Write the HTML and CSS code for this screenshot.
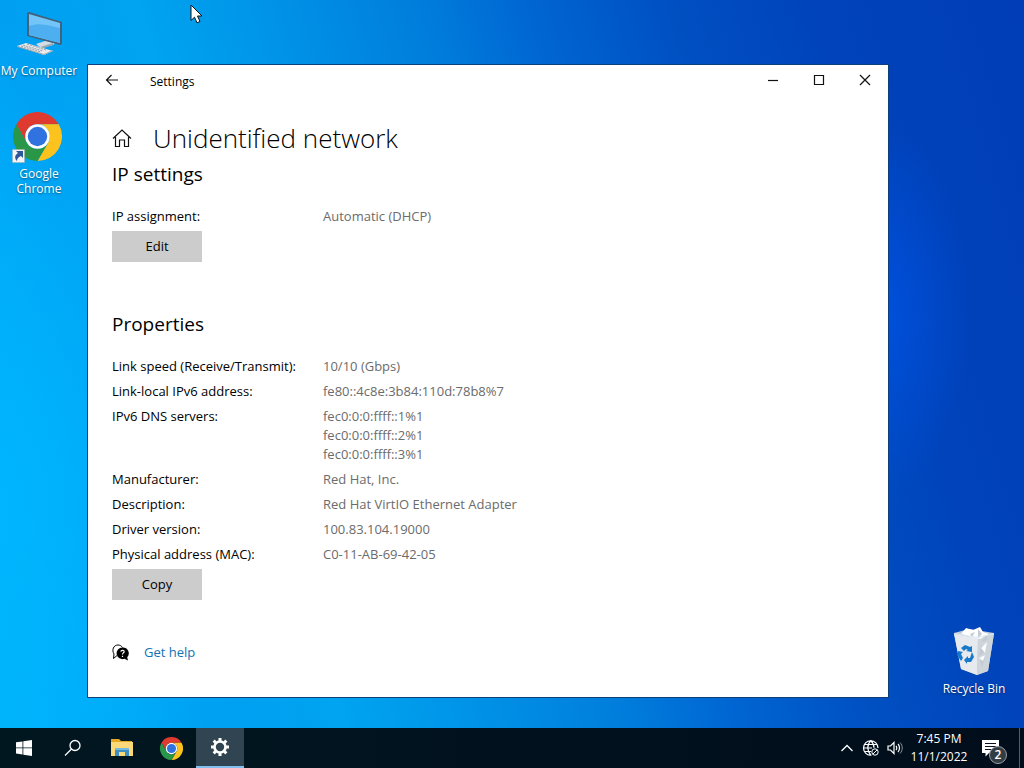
FILE: index.html
```html
<!doctype html>
<html lang="en">
  <head>
    <meta charset="utf-8">
    <meta name="viewport" content="width=device-width, initial-scale=1">
    <link rel="stylesheet" href="styles.css">
    <title>Settings</title>
  </head>
  <body>
    <svg class="defs" aria-hidden="true">
      <symbol id="chrome" viewBox="0 0 48 48">
        <path fill="#df3a30" d="M24 12H44.8A24 24 0 0 0 3.2 12L13.6 30A12 12 0 0 1 24 12z"/>
        <path fill="#fcc31e" d="M34.4 30L24 48A24 24 0 0 0 44.8 12H24A12 12 0 0 1 34.4 30z"/>
        <path fill="#2a9748" d="M13.6 30L3.2 12A24 24 0 0 0 24 48L34.4 30A12 12 0 0 1 13.6 30z"/>
        <circle cx="24" cy="24" r="12" fill="#fff"/>
        <circle cx="24" cy="24" r="9.5" fill="#2f72e0"/>
      </symbol>
    </svg>

    <main class="desktop">
      <a href="#" class="shortcut computer">
        <svg width="48" height="48" viewBox="0 0 48 48">
          <path fill="#d5dce2" d="M21 34l12-4 7 3-2 2-12 3z"/>
          <path fill="#9ba9b5" d="M25 37l13-4v2l-12 4z"/>
          <path fill="#41617c" d="M12 3l2-1 33 10v22l-2 1-33-9z"/>
          <path fill="#73c5f9" d="M14 4l31 9v20l-31-8z"/>
          <path fill="#4eaff0" d="M14 16c12-4 20 0 31 2v15l-31-8z"/>
          <path fill="#e8eaec" d="M2 36l9-3 27 8-9 4z"/>
          <path fill="#9ca5ac" d="M2 36v1l27 8v-1zM29 44v1l9-4v-1z"/>
          <path stroke="#949da5" stroke-width="1" stroke-dasharray="2 1" fill="none" d="M8 35l20 6M12 34l19 6M6 36l20 6"/>
        </svg>
        <span>My Computer</span>
      </a>
      <a href="#" class="shortcut google">
        <svg width="52" height="52" viewBox="0 0 52 52">
          <use href="#chrome" x="1" y="1" width="49" height="49"/>
          <path fill="#f4f4f4" stroke="#aaa" stroke-width=".5" d="M.5 38.500h12v13H.5z"/>
          <path fill="#2c579b" d="M4 40h7v7l-2-2c-3 1-4 3-4 5-3-3-2-6 1-8z"/>
        </svg>
        <span>Google<br>Chrome</span>
      </a>
      <a href="#" class="shortcut recycle">
        <svg width="48" height="52" viewBox="0 0 48 52">
          <path fill="#c2cdd7" d="M4 8l15-4 25 4-6 38-11 4-16-6z"/>
          <path fill="#e6e9ed" d="M4 9l24 4-1 37-16-6z"/>
          <path fill="#cdd4da" d="M28 13l16-4-6 37-11 4z"/>
          <path fill="#fff" d="M11 9l5-6 7 2 7-3 3 5 6 2-9 5-8-2z"/>
          <path fill="#c3cad1" d="M17 4l3 5 5-2-3 5zM28 4l4 5-4 4zM36 10l-5 7 7-2zM31 20l5 6-7 5zM30 36l5-3-3 9z"/>
          <path fill="#fafbfc" d="M31 23l6-6-2 11zM29 33l6-3-2 6z"/>
          <path stroke="#dbe7f2" stroke-width="1" fill="none" d="M4 8.500l24 4 16-4"/>
          <path fill="#1878c9" d="M11 23l4-3 5 2 2-1v6l-6-1 2-1-2-1-2 2zM8 26l5 1-2 2 2 4-2 3-4-6zM22 27l2 5-3 5h-4v2l-3-4 4-4v2h2l1-3z"/>
        </svg>
        <span>Recycle Bin</span>
      </a>

      <section class="window">
        <header class="titlebar">
          <button class="back" aria-label="Back">
            <svg width="14" height="12" viewBox="0 0 14 12"><path d="M13 6H1.500M6.500 1l-5 5 5 5"/></svg>
          </button>
          <span class="title">Settings</span>
          <button class="control" aria-label="Minimize">
            <svg width="12" height="12" viewBox="0 0 12 12"><path d="M1 6.500h10"/></svg>
          </button>
          <button class="control" aria-label="Maximize">
            <svg width="12" height="12" viewBox="0 0 12 12"><path d="M1.500 1.500h9v9h-9z"/></svg>
          </button>
          <button class="control" aria-label="Close">
            <svg width="12" height="12" viewBox="0 0 12 12"><path d="M1 1l10 10M11 1L1 11"/></svg>
          </button>
        </header>

        <div class="content">
          <div class="page-head">
            <svg width="20" height="20" viewBox="0 0 20 20"><path d="M1 10.500L10 2l9 8.500M3.500 9v9.500h4v-6.500h5v6.500h4V9"/></svg>
            <h1>Unidentified network</h1>
          </div>

          <h2>IP settings</h2>
          <table>
            <tr><th scope="row">IP assignment:</th><td>Automatic (DHCP)</td></tr>
          </table>
          <button class="action">Edit</button>

          <h2 class="properties">Properties</h2>
          <table>
            <tr><th scope="row">Link speed (Receive/Transmit):</th><td>10/10 (Gbps)</td></tr>
            <tr><th scope="row">Link-local IPv6 address:</th><td>fe80::4c8e:3b84:110d:78b8%7</td></tr>
            <tr><th scope="row">IPv6 DNS servers:</th><td>fec0:0:0:ffff::1%1<br>fec0:0:0:ffff::2%1<br>fec0:0:0:ffff::3%1</td></tr>
            <tr><th scope="row">Manufacturer:</th><td>Red Hat, Inc.</td></tr>
            <tr><th scope="row">Description:</th><td>Red Hat VirtIO Ethernet Adapter</td></tr>
            <tr><th scope="row">Driver version:</th><td>100.83.104.19000</td></tr>
            <tr><th scope="row">Physical address (MAC):</th><td>C0-11-AB-69-42-05</td></tr>
          </table>
          <button class="action">Copy</button>

          <div class="help">
            <svg width="17" height="17" viewBox="0 0 17 17">
              <path fill="none" stroke="#000" d="M5 11.500l-3.500 3 .5-4.500C-.5 6 1.500 1 6 1c2 0 3.500 1 4.500 2.500"/>
              <path d="M10.500 3.500a5.800 5.800 0 1 0 2 11.200l3.500 1.800-.8-3.300a5.800 5.800 0 0 0-4.700-9.700z"/>
              <path fill="none" stroke="#fff" stroke-width="1.200" d="M8.800 7.700c.3-2 3.600-1.700 3.300.2-.2 1-1.600 1.200-1.600 2.600M10.500 11.800v1.200"/>
            </svg>
            <a href="#">Get help</a>
          </div>
        </div>
      </section>

      <svg class="cursor" width="14" height="20" viewBox="0 0 14 20">
        <path fill="#fff" stroke="#111" d="M1 1v15.500l3.500-3.300 2.500 5.600 3-1.300-2.500-5.500h4.500z"/>
      </svg>
    </main>

    <footer class="taskbar">
      <button aria-label="Start">
        <svg width="16" height="16" viewBox="0 0 16 16"><path fill="#fff" d="M0 2.300l6.500-.9v6.100H0zM7.300 1.200L16 0v7.500H7.300zM0 8.300h6.500v6.200L0 13.600zM7.300 8.300H16V16l-8.700-1.200z"/></svg>
      </button>
      <button aria-label="Search">
        <svg width="18" height="18" viewBox="0 0 18 18"><circle cx="11" cy="6.500" r="5" fill="none" stroke="#fff" stroke-width="1.300"/><path stroke="#fff" stroke-width="1.300" d="M7.500 10L1 16.500"/></svg>
      </button>
      <button aria-label="File Explorer">
        <svg width="22" height="20" viewBox="0 0 22 20">
          <path fill="#e8a827" d="M0 1h8l2 2h11v15H0z"/>
          <path fill="#fcd978" d="M0 4h22v14H0z"/>
          <path fill="#408fc1" d="M4 10h14v8h-4v-4H8v4H4z"/>
          <path fill="#75b9de" d="M4 10h14v2H4z"/>
        </svg>
      </button>
      <button aria-label="Google Chrome">
        <svg width="23" height="23"><use href="#chrome"/></svg>
      </button>
      <button class="active" aria-label="Settings">
        <svg width="20" height="20" viewBox="-10 -10 20 20">
          <circle r="5.500" fill="none" stroke="#fff" stroke-width="2.600"/>
          <g stroke="#fff" stroke-width="3">
            <path d="M0-9v3M0 6v3M-9 0h3M6 0h3"/>
            <path transform="rotate(45)" d="M0-9v3M0 6v3M-9 0h3M6 0h3"/>
          </g>
        </svg>
      </button>

      <div class="tray">
        <button aria-label="Show hidden icons">
          <svg width="14" height="16" viewBox="0 0 14 16"><path stroke-width="1.300" d="M1.500 11L7 5.500l5.500 5.500"/></svg>
        </button>
        <button aria-label="Network">
          <svg width="18" height="18" viewBox="0 0 18 18">
            <path stroke-width="1.200" d="M9.500 16C5 17 1.500 13 1.500 9a7.200 7.200 0 1 1 14.500 0M8.800 1.700c-4 4-4 10 0 14.500M8.800 1.700c2.200 2 3.200 4.500 3.200 7M2.500 5.500h12.500M1.500 9H10M2.500 12.500H9"/>
            <circle cx="13" cy="13" r="3.200"/><path d="M11 15l4-4"/>
          </svg>
        </button>
        <button aria-label="Volume">
          <svg width="16" height="16" viewBox="0 0 16 16"><path stroke-width="1.200" d="M1 6v4h2.500L7 13.500v-11L3.500 6zM9 6c1 1 1 3 0 4M11 4c2 2 2 6 0 8"/><path stroke="#8a929b" d="M13 2.500c3 3 3 8 0 11"/></svg>
        </button>
        <button class="clock"><span>7:45 PM</span><span>11/1/2022</span></button>
        <button class="notices" aria-label="Notifications">
          <svg width="17" height="17" viewBox="0 0 17 17"><path fill="#fff" stroke="none" d="M0 0h17v13H7l-3.500 3.500V13H0z"/><path stroke="#07111f" d="M3 3.500h11M3 6.500h11M3 9.500h7"/></svg>
          <span class="badge">2</span>
        </button>
        <button class="peek" aria-label="Show desktop"></button>
      </div>
    </footer>
  </body>
</html>
```
FILE: styles.css
```css
* {
  box-sizing: border-box;
}

body {
  margin: 0;
  min-height: 100vh;
  display: flex;
  flex-direction: column;
  font: 13px/19px "Open Sans", sans-serif;
  color: #000;
}

h1, h2 {
  margin: 0;
  font-weight: 400;
}

button {
  padding: 0;
  border: none;
  background: none;
  font: inherit;
  color: inherit;
}

svg {
  flex: none;
}

.defs {
  position: absolute;
  width: 0;
  height: 0;
}

.desktop {
  position: relative;
  flex: 1;
  background:
    radial-gradient(ellipse 90px 190px at 86% 43%, rgba(0, 86, 235, .7), transparent),
    radial-gradient(ellipse 260px 500px at 0 70%, rgba(0, 184, 255, .8), transparent),
    linear-gradient(74deg, #00b2fa 0%, #009ff2 17%, #00a4f0 28%, #0094e8 38%, #007ddc 51%, #0065d2 60%, #0050c2 71%, #0043ba 83%, #003db6 100%);
}

/* desktop icons */
.shortcut {
  position: absolute;
  display: flex;
  flex-direction: column;
  align-items: center;
  width: 78px;
  font-size: 12px;
  line-height: 15px;
  text-align: center;
  text-decoration: none;
  color: #fff;
  text-shadow: 0 1px 2px rgba(0, 0, 0, .5);
}

.computer {
  top: 10px;
  left: 0;
  gap: 5px;
}

.google {
  top: 111px;
  left: 0;
  gap: 3px;
}

.google svg {
  margin-right: 2px;
}

.recycle {
  right: 11px;
  bottom: 32px;
  gap: 4px;
}

/* settings window */
.window {
  position: absolute;
  top: 64px;
  right: 135px;
  bottom: 30px;
  left: 87px;
  border: 1px solid #0c3f7c;
  background: #fff;
}

.titlebar {
  display: flex;
  align-items: center;
  height: 33px;
  font-size: 12px;
}

.titlebar svg,
.page-head svg {
  fill: none;
  stroke: #111;
  stroke-width: 1.2;
}

.back {
  width: 48px;
  height: 32px;
}

.title {
  flex: 1;
  padding-left: 14px;
}

.control {
  width: 46px;
  height: 32px;
}

.content {
  padding: 20px 24px;
}

.page-head {
  display: flex;
  align-items: center;
  gap: 21px;
  height: 40px;
}

h1 {
  font-size: 26px;
  line-height: 40px;
  font-weight: 300;
}

h2 {
  font-size: 19px;
  line-height: 32px;
}

.properties {
  margin-top: 46px;
}

table {
  margin: 14px 0 2px;
  border-collapse: collapse;
}

th,
td {
  padding: 3px 0;
  text-align: left;
  vertical-align: top;
  font-weight: 400;
}

th {
  width: 211px;
}

td {
  color: #6b6b6b;
}

.action {
  width: 90px;
  height: 31px;
  background: #ccc;
}

.help {
  display: flex;
  align-items: center;
  gap: 15px;
  margin-top: 43px;
}

.help a {
  color: #0f74b3;
  text-decoration: none;
}

.cursor {
  position: absolute;
  top: 4px;
  left: 190px;
}

/* taskbar */
.taskbar {
  display: flex;
  gap: 1px;
  height: 40px;
  background: linear-gradient(90deg, #011720, #010d1b);
  color: #fff;
}

.taskbar button {
  display: flex;
  align-items: center;
  justify-content: center;
  width: 48px;
}

.taskbar .active {
  background: #304551;
  border-bottom: 2px solid #83bfee;
}

.tray {
  display: flex;
  margin-left: auto;
}

.tray svg {
  fill: none;
  stroke: #fff;
}

.tray button {
  width: 24px;
}

.tray .clock {
  flex-direction: column;
  width: 64px;
  font-size: 12px;
  line-height: 18px;
}

.tray .notices {
  position: relative;
  width: 48px;
  padding-right: 9px;
}

.badge {
  position: absolute;
  right: 12px;
  bottom: 4px;
  width: 18px;
  height: 18px;
  border: 1px solid #98a0a8;
  border-radius: 50%;
  background: #333b43;
  font-size: 12px;
  font-weight: 600;
  line-height: 16px;
}

.tray .peek {
  width: 5px;
  border-left: 1px solid #535c67;
}
```
